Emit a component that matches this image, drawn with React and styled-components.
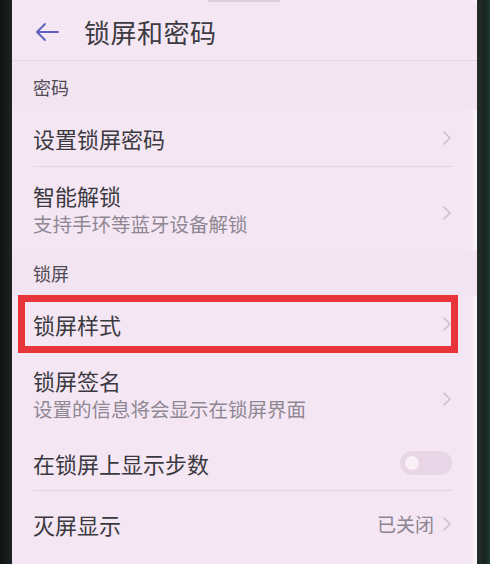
import styled, { createGlobalStyle } from "styled-components";

const GlobalStyle = createGlobalStyle`
  html, body {
    margin: 0;
    padding: 0;
    background: #1b2221;
  }
  body {
    font-family: "Noto Sans CJK SC", "Noto Sans", sans-serif;
  }
`;

const Chevron = () => (
  <svg width="10" height="16" viewBox="0 0 10 16">
    <polyline
      points="2,2 8,8 2,14"
      fill="none"
      stroke="#cbc0ca"
      strokeWidth="1.6"
      strokeLinecap="round"
      strokeLinejoin="round"
    />
  </svg>
);

const BackArrow = () => (
  <svg width="24" height="20" viewBox="0 0 24 20">
    <path
      d="M23 10H2M10 2L2 10l8 8"
      fill="none"
      stroke="#5b5fc0"
      strokeWidth="1.8"
      strokeLinecap="round"
      strokeLinejoin="round"
    />
  </svg>
);

function Row({ title, sub, right, divider = true, height = 57 }) {
  return (
    <StRow $height={height} $divider={divider}>
      <StRowText>
        <StTitle>{title}</StTitle>
        {sub && <StSub>{sub}</StSub>}
      </StRowText>
      {right}
    </StRow>
  );
}

function App() {
  return (
    <>
      <GlobalStyle />
      <StFrame>
        <StBezel $side="left" />
        <StScreen>
          <StStatus>
            <StNotch />
          </StStatus>
          <StHeader>
            <BackArrow />
            <StHeaderTitle>锁屏和密码</StHeaderTitle>
          </StHeader>
          <StSection $height={49}>密码</StSection>
          <Row title="设置锁屏密码" right={<StChev><Chevron /></StChev>} />
          <Row
            title="智能解锁"
            sub="支持手环等蓝牙设备解锁"
            height={83}
            divider={false}
            right={<StChev $down={10}><Chevron /></StChev>}
          />
          <StSection $height={46}>锁屏</StSection>
          <StMarked>
            <Row title="锁屏样式" divider={false} height={56} right={<StChev><Chevron /></StChev>} />
            <StHighlight />
          </StMarked>
          <Row
            title="锁屏签名"
            sub="设置的信息将会显示在锁屏界面"
            height={84}
            divider={false}
            right={<StChev $down={10}><Chevron /></StChev>}
          />
          <Row
            title="在锁屏上显示步数"
            height={55}
            right={
              <StToggle>
                <StKnob />
              </StToggle>
            }
          />
          <Row
            title="灭屏显示"
            height={66}
            divider={false}
            right={
              <StValueWrap>
                <StValue>已关闭</StValue>
                <StChev><Chevron /></StChev>
              </StValueWrap>
            }
          />
        </StScreen>
        <StBezel $side="right" />
      </StFrame>
    </>
  );
}

const StFrame = styled.div`
  display: flex;
  width: 490px;
  height: 564px;
  overflow: hidden;
`;

const StBezel = styled.div`
  flex: 0 0 ${(p) => (p.$side === "left" ? "12px" : "13px")};
  background: ${(p) =>
    p.$side === "left"
      ? "linear-gradient(90deg, #0e1211, #1e2423)"
      : "linear-gradient(90deg, #252d2b, #17241f 60%, #1e3a33)"};
`;

const StScreen = styled.div`
  flex: 1;
  display: flex;
  flex-direction: column;
  background: #f5e6f4;
  box-shadow: inset -7px 0 4px -3px rgba(255, 255, 255, 0.55);
`;

const StStatus = styled.div`
  height: 3px;
  display: flex;
`;

const StNotch = styled.div`
  margin-left: 196px;
  width: 72px;
  height: 2px;
  background: #d8d2d8;
`;

const StHeader = styled.div`
  height: 57px;
  display: flex;
  align-items: center;
  gap: 25px;
  padding-left: 23px;
  border-bottom: 1px solid #e6d5e4;
  background: #f4e6f3;
`;

const StHeaderTitle = styled.span`
  font-size: 26px;
  color: #3d3b42;
  letter-spacing: 0.5px;
`;

const StSection = styled.div`
  height: ${(p) => p.$height}px;
  box-sizing: border-box;
  display: flex;
  align-items: flex-end;
  padding: 0 0 10px 21px;
  font-size: 18px;
  color: #4e4b54;
  background: #f3e4f2;
`;

const StRow = styled.div`
  height: ${(p) => p.$height}px;
  box-sizing: border-box;
  display: flex;
  align-items: center;
  justify-content: space-between;
  margin: 0 25px 0 21px;
  border-bottom: 1px solid ${(p) => (p.$divider ? "#e5d4e3" : "transparent")};
`;

const StRowText = styled.div`
  display: flex;
  flex-direction: column;
  gap: 3px;
`;

const StTitle = styled.div`
  font-size: 22px;
  line-height: 28px;
  color: #3b3940;
`;

const StSub = styled.div`
  font-size: 19.5px;
  line-height: 24px;
  color: #8e8893;
`;

const StChev = styled.div`
  display: flex;
  margin-top: ${(p) => p.$down || 0}px;
`;

const StMarked = styled.div`
  position: relative;
`;

const StHighlight = styled.div`
  position: absolute;
  left: 6px;
  right: 19px;
  top: -1px;
  bottom: -1px;
  border: 7px solid #e8343b;
  pointer-events: none;
`;

const StToggle = styled.div`
  width: 52px;
  height: 24px;
  border-radius: 12px;
  background: #e8d6e6;
  display: flex;
  align-items: center;
  padding-left: 5px;
  box-sizing: border-box;
`;

const StKnob = styled.div`
  width: 14px;
  height: 14px;
  border-radius: 50%;
  background: #f8eff7;
`;

const StValueWrap = styled.div`
  display: flex;
  align-items: center;
  gap: 8px;
`;

const StValue = styled.span`
  font-size: 19px;
  color: #8b8590;
`;

export default App;
